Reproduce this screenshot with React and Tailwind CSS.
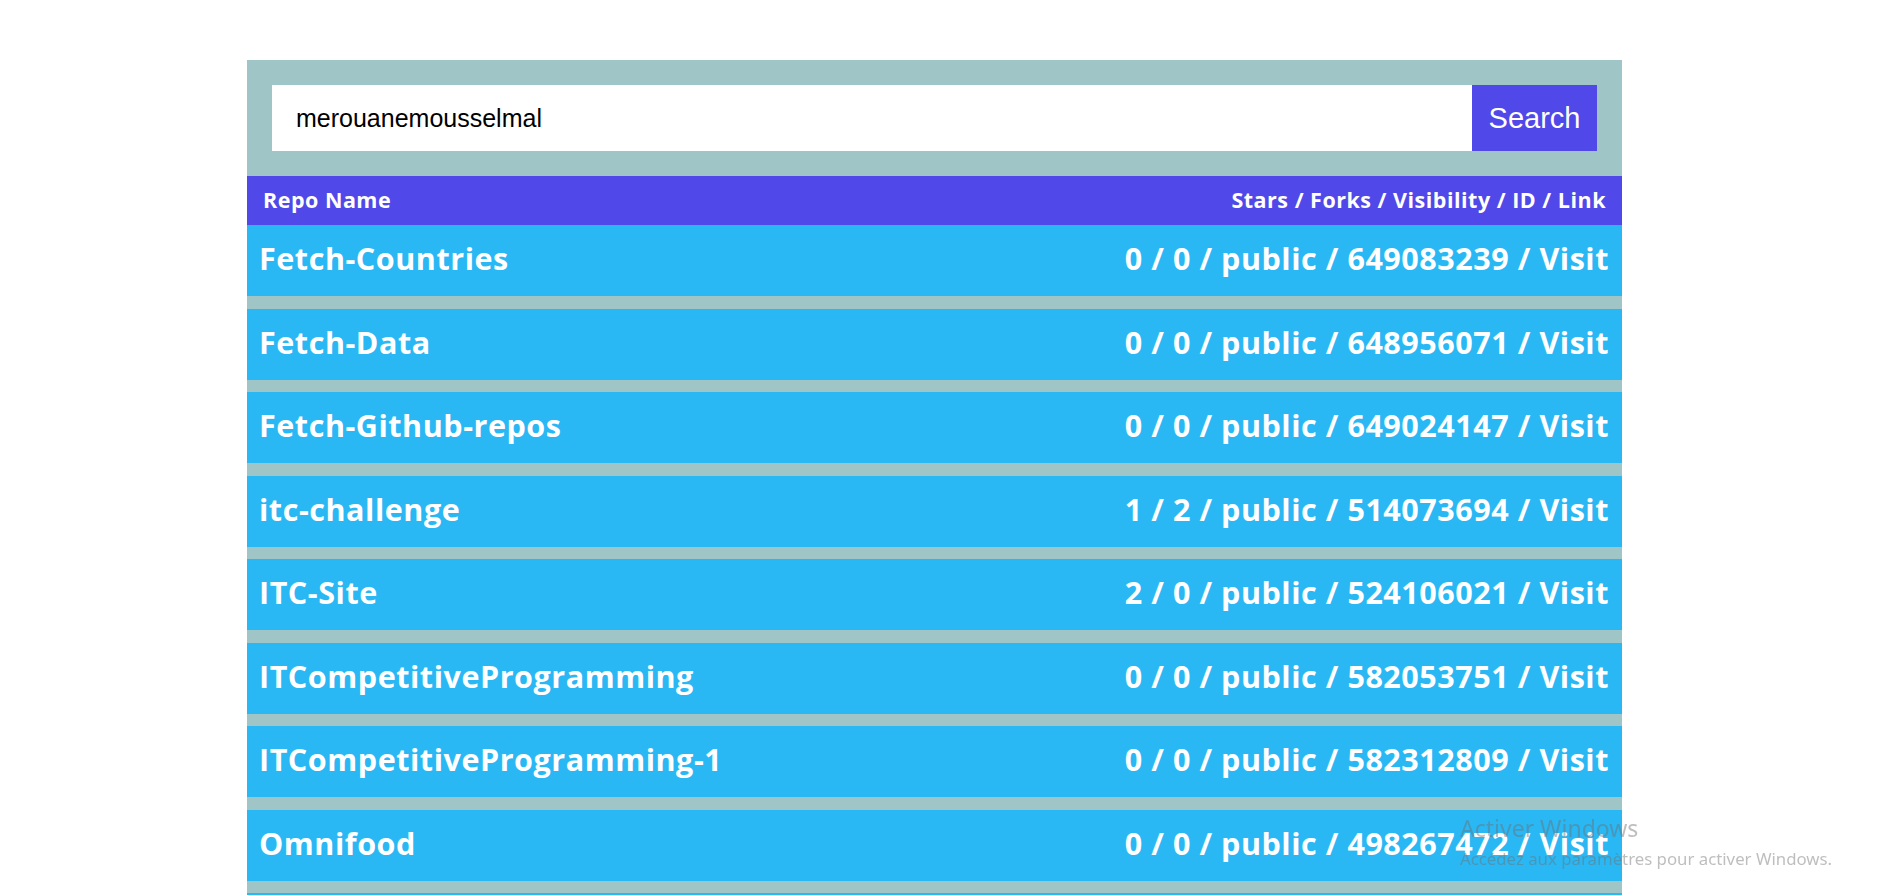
import React from "react";

const repos = [
  { name: "Fetch-Countries", stars: 0, forks: 0, id: "649083239" },
  { name: "Fetch-Data", stars: 0, forks: 0, id: "648956071" },
  { name: "Fetch-Github-repos", stars: 0, forks: 0, id: "649024147" },
  { name: "itc-challenge", stars: 1, forks: 2, id: "514073694" },
  { name: "ITC-Site", stars: 2, forks: 0, id: "524106021" },
  { name: "ITCompetitiveProgramming", stars: 0, forks: 0, id: "582053751" },
  { name: "ITCompetitiveProgramming-1", stars: 0, forks: 0, id: "582312809" },
  { name: "Omnifood", stars: 0, forks: 0, id: "498267472" },
  { name: "Portfolio", stars: 0, forks: 0, id: "501234567" },
  { name: "Todo-App", stars: 0, forks: 0, id: "502345678" },
];

export default function App() {
  return (
    <div className="min-h-screen bg-white pt-[60px] pb-10 flex justify-center pr-2">
      <div className="w-[1375px] bg-[#9fc5c7]">
        <form
          className="flex p-[25px]"
          onSubmit={(e) => e.preventDefault()}
        >
          <input
            type="text"
            defaultValue="merouanemousselmal"
            className="flex-1 h-[66px] bg-white pl-6 text-[25px] text-black outline-none font-['Liberation_Sans',Arial,sans-serif]"
          />
          <button
            type="submit"
            className="w-[125px] h-[66px] bg-[#5048e8] text-white text-[29px] pt-[1px] font-['Liberation_Sans',Arial,sans-serif]"
          >
            Search
          </button>
        </form>
        <div className="h-[49px] bg-[#5048e8] flex items-center justify-between px-4 text-white font-bold text-[21.5px] tracking-[0.5px] font-['Open_Sans',sans-serif]">
          <span>Repo Name</span>
          <span>Stars / Forks / Visibility / ID / Link</span>
        </div>
        <div className="flex flex-col">
          {repos.map((r) => (
            <div
              key={r.id}
              className="h-[71px] mb-[12.5px] bg-[#2ab8f5] flex items-center justify-between pl-[12px] pr-[13px] pb-[3px] text-white font-bold text-[30.5px] tracking-[0.55px] font-['Open_Sans',sans-serif]"
            >
              <span>{r.name}</span>
              <span>
                {r.stars} / {r.forks} / public / {r.id} /{" "}
                <a href="#" className="text-white">Visit</a>
              </span>
            </div>
          ))}
        </div>
      </div>
      <div className="fixed left-[1460px] top-[814px] pointer-events-none text-[rgba(110,110,110,0.45)] font-['Noto_Sans',sans-serif] leading-tight">
        <div className="text-[23px]">Activer Windows</div>
        <div className="text-[16.8px] mt-[5px]">Accédez aux paramètres pour activer Windows.</div>
      </div>
    </div>
  );
}
